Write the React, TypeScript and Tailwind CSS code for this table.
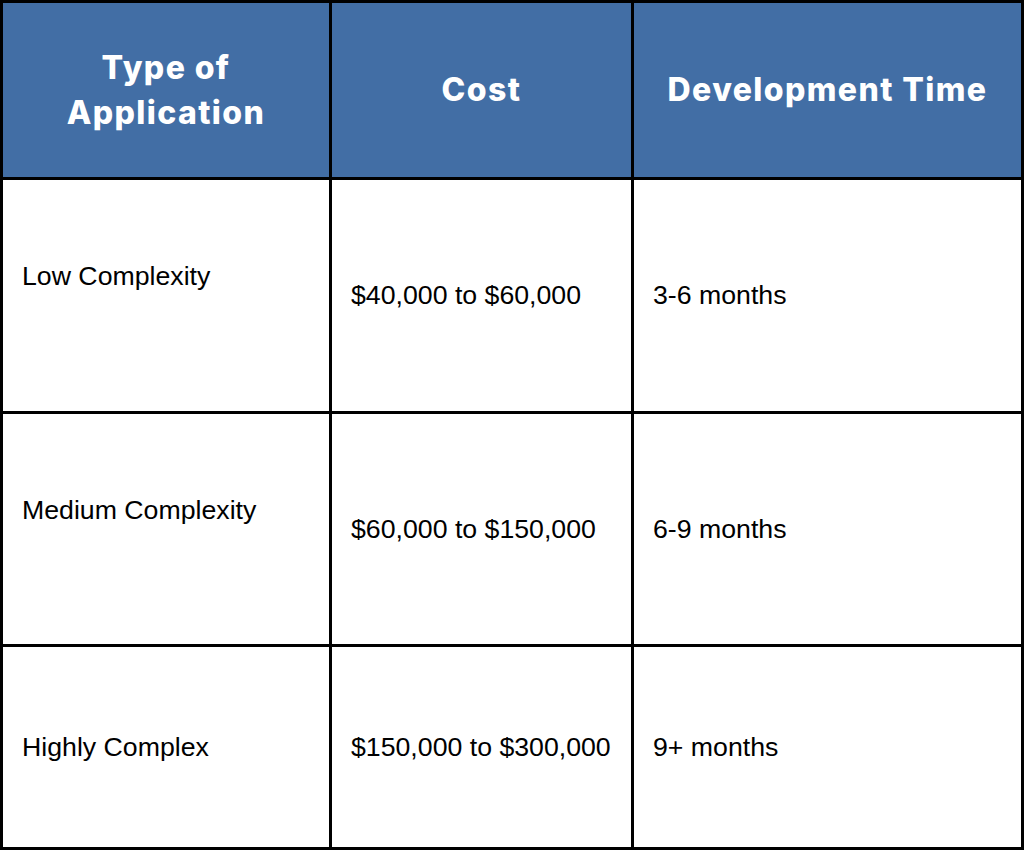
import React from "react";

const rows = [
  { type: "Low Complexity", cost: "$40,000 to $60,000", time: "3-6 months", shift: true },
  { type: "Medium Complexity", cost: "$60,000 to $150,000", time: "6-9 months", shift: true },
  { type: "Highly Complex", cost: "$150,000 to $300,000", time: "9+ months", shift: false },
];

export default function App() {
  const head =
    "bg-[#426ea5] text-white flex items-center justify-center text-center font-extrabold text-[32px] tracking-[1.4px] leading-[45px] font-['Inter',sans-serif]";
  const cell =
    "bg-white text-black flex items-center px-[19px] text-[26.7px] font-['Liberation_Sans',Arial,sans-serif]";
  return (
    <div className="w-[1024px] h-[850px] bg-black p-[3px]">
      <div className="grid h-full w-full grid-cols-[326px_299px_387px] grid-rows-[174px_231px_230px_200px] gap-[3px]">
        <div className={head}>
          <span className="pb-[1px]">
            Type of
            <br />
            Application
          </span>
        </div>
        <div className={head}>
          <span className="pb-[2px]">Cost</span>
        </div>
        <div className={head}>
          <span className="pb-[2px]">Development Time</span>
        </div>
        {rows.map((r) => (
          <React.Fragment key={r.type}>
            <div className={cell}>
              <span className={r.shift ? "pb-[38px]" : ""}>{r.type}</span>
            </div>
            <div className={cell}>{r.cost}</div>
            <div className={cell}>{r.time}</div>
          </React.Fragment>
        ))}
      </div>
    </div>
  );
}
